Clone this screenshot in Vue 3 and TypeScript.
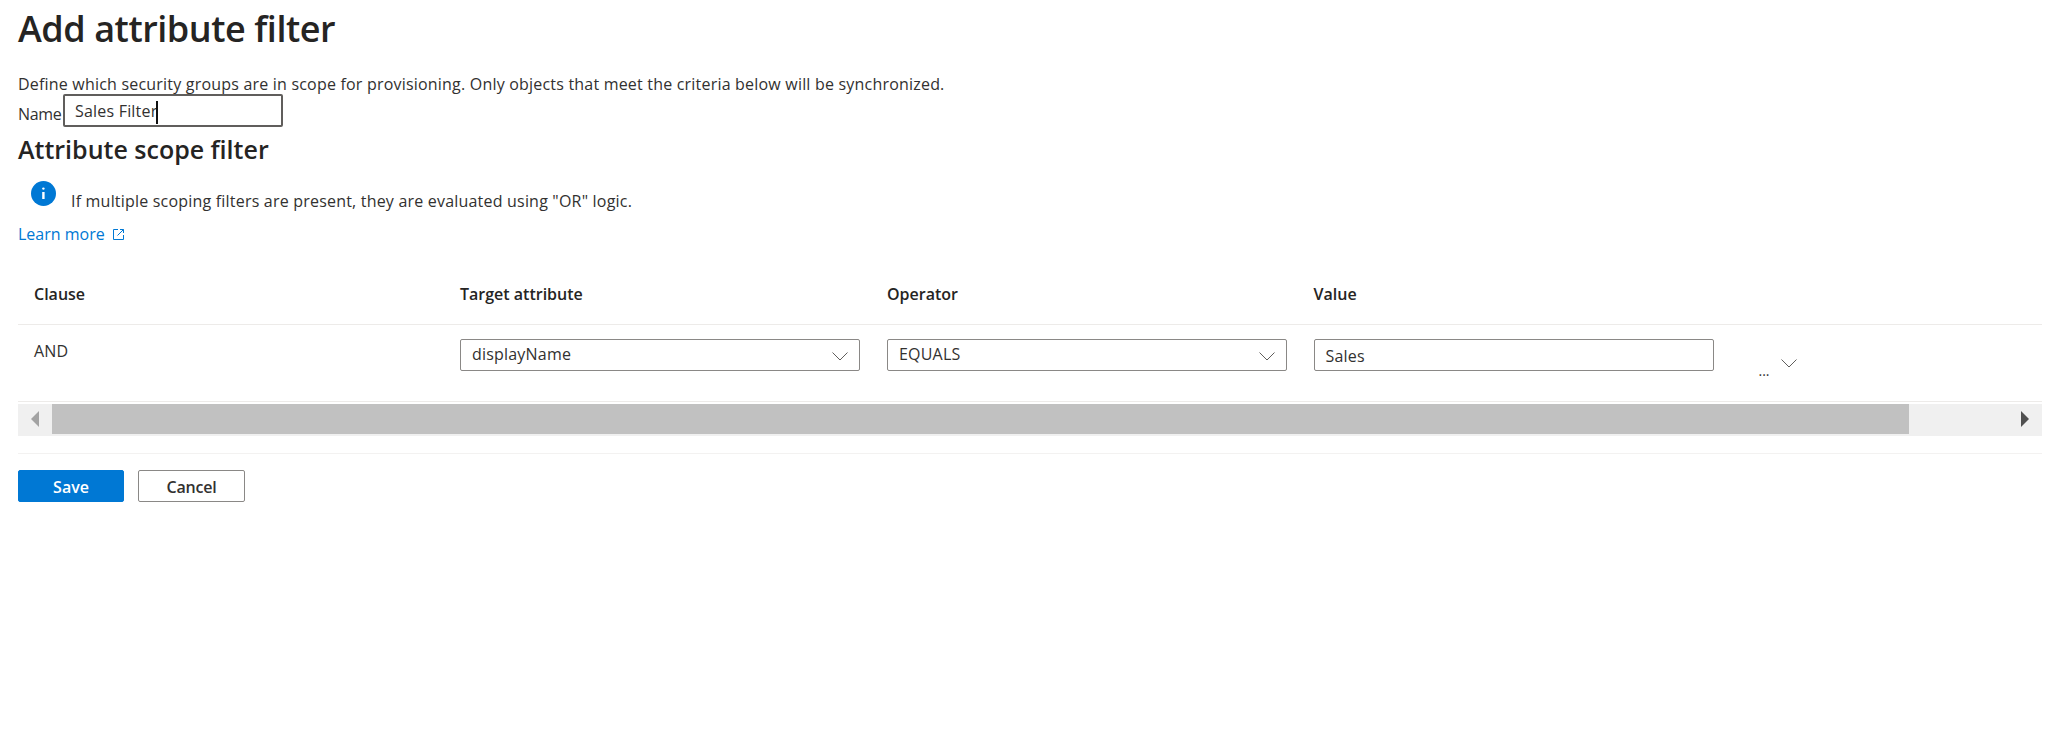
<script setup lang="ts">
const columns: string[] = ['Clause', 'Target attribute', 'Operator', 'Value']
</script>

<template>
  <main class="page">
    <h1 class="title">Add attribute filter</h1>
    <p class="desc">Define which security groups are in scope for provisioning. Only objects that meet the criteria below will be synchronized.</p>
    <div class="name-row">
      <label class="name-label">Name</label>
      <div class="name-input">Sales Filter<span class="caret"></span></div>
    </div>
    <h2 class="subtitle">Attribute scope filter</h2>
    <div class="info">
      <svg class="info-icon" viewBox="0 0 25 25" width="25" height="25">
        <circle cx="12.5" cy="12.5" r="12.5" fill="#0078d4" />
        <rect x="11.2" y="11" width="2.4" height="7" fill="#fff" />
        <rect x="11.2" y="6.4" width="2.4" height="2.4" rx="1.2" fill="#fff" />
      </svg>
      <span class="info-text">If multiple scoping filters are present, they are evaluated using "OR" logic.</span>
    </div>
    <a class="learn">
      Learn more
      <svg class="ext" viewBox="0 0 13 13" width="13" height="13" fill="none" stroke="#0078d4" stroke-width="1">
        <path d="M6 1.5H1.5V11.5H11.5V7" />
        <path d="M8 1.5H11.5V5M11.5 1.5L5.5 7.5" />
      </svg>
    </a>

    <section class="table">
      <div class="grid head">
        <div v-for="c in columns" :key="c" class="th">{{ c }}</div>
      </div>
      <div class="grid row">
        <div class="cell clause">AND</div>
        <div class="cell">
          <div class="field select">
            <span>displayName</span>
            <svg class="chev" viewBox="0 0 16 9" width="16" height="9" fill="none" stroke="#605e5c"><path d="M.5.5L8 8L15.5.5" /></svg>
          </div>
        </div>
        <div class="cell">
          <div class="field select">
            <span>EQUALS</span>
            <svg class="chev" viewBox="0 0 16 9" width="16" height="9" fill="none" stroke="#605e5c"><path d="M.5.5L8 8L15.5.5" /></svg>
          </div>
        </div>
        <div class="cell">
          <div class="field value">Sales</div>
        </div>
        <div class="cell actions">
          <span class="dots">...</span>
          <svg viewBox="0 0 16 9" width="16" height="9" fill="none" stroke="#605e5c"><path d="M.5.5L8 8L15.5.5" /></svg>
        </div>
      </div>
      <div class="scrollbar">
        <span class="arrow left"></span>
        <div class="thumb"></div>
        <span class="arrow right"></span>
      </div>
    </section>

    <div class="buttons">
      <button class="btn primary">Save</button>
      <button class="btn">Cancel</button>
    </div>
  </main>
</template>

<style>
body { background: #fff; }
</style>

<style scoped>
.page {
  padding: 0 8px 0 18px;
  font-family: "Open Sans", "Noto Sans", sans-serif;
  font-size: 16px;
  letter-spacing: 0.2px;
  color: #323130;
}
.title {
  margin: 0;
  height: 60px;
  font-size: 36px;
  line-height: 58px;
  font-weight: 600;
  letter-spacing: -0.45px;
  color: #252423;
}
.desc {
  margin: 0;
  padding-top: 14px;
  line-height: 20px;
}
.name-row {
  display: flex;
  align-items: flex-start;
}
.name-label {
  width: 45px;
  line-height: 20px;
  padding-top: 10px;
  letter-spacing: -0.3px;
}
.name-input {
  box-sizing: border-box;
  width: 220px;
  height: 33px;
  border: 2px solid #605e5c;
  border-radius: 2px;
  padding-left: 10px;
  padding-top: 1px;
  line-height: 29px;
  color: #323130;
}
.caret {
  display: inline-block;
  width: 1.5px;
  height: 23px;
  margin-left: -1px;
  vertical-align: -7px;
  background: #111;
}
.subtitle {
  margin: 0;
  height: 36px;
  font-size: 25px;
  line-height: 44px;
  font-weight: 600;
  letter-spacing: 0;
  color: #252423;
}
.info {
  display: flex;
  align-items: flex-start;
  margin-top: 18px;
  padding-left: 13px;
  height: 25px;
}
.info-text {
  margin-left: 15px;
  line-height: 20px;
  padding-top: 10px;
}
.learn {
  display: flex;
  align-items: center;
  gap: 7px;
  margin-top: 18px;
  height: 20px;
  letter-spacing: 0;
  color: #0078d4;
}
.table {
  margin-top: 15px;
  width: 2024px;
}
.grid {
  display: grid;
  grid-template-columns: 426px 427px 426.5px 1fr;
}
.head {
  align-items: center;
  padding-top: 4px;
  height: 61px;
  border-bottom: 1px solid #edebe9;
}
.th {
  padding-left: 16px;
  font-weight: 600;
  letter-spacing: 0;
  color: #252423;
}
.row {
  grid-template-columns: 426px 427px 426.5px 461px 1fr;
  height: 77px;
  border-bottom: 1px solid #edebe9;
  box-sizing: border-box;
}
.cell {
  padding: 14px 0 0 16px;
}
.clause {
  padding-top: 16px;
  line-height: 20px;
}
.field {
  box-sizing: border-box;
  height: 32px;
  border: 1px solid #8a8886;
  border-radius: 2px;
  display: flex;
  align-items: center;
  justify-content: space-between;
}
.select {
  width: 400px;
  padding: 0 11px 2px;
}
.chev { margin-top: 4px; }
.value {
  width: 400px;
  padding-left: 11px;
  padding-top: 2px;
}
.actions {
  display: flex;
  align-items: flex-start;
  padding: 34px 0 0 0;
  gap: 11px;
}
.dots {
  font-size: 14px;
  line-height: 16px;
  margin-top: 4px;
  letter-spacing: 0;
}
.scrollbar {
  display: flex;
  align-items: stretch;
  height: 32px;
  margin-top: 2px;
  background: #f0f0f0;
  padding-bottom: 2px;
  box-sizing: border-box;
  position: relative;
}
.thumb {
  margin-left: 34px;
  width: 1857px;
  height: 30px;
  background: #c1c1c1;
}
.arrow {
  position: absolute;
  top: 7px;
  width: 0;
  height: 0;
  border-top: 8px solid transparent;
  border-bottom: 8px solid transparent;
}
.arrow.left {
  left: 13px;
  border-right: 8px solid #a3a3a3;
}
.arrow.right {
  right: 13px;
  border-left: 8px solid #505050;
}
.buttons {
  display: flex;
  gap: 14px;
  margin-top: 17px;
  padding-top: 16px;
  border-top: 1px solid #f3f2f1;
  width: 2024px;
}
.btn {
  box-sizing: border-box;
  width: 107px;
  height: 32px;
  padding: 2px 0 0;
  border: 1px solid #8a8886;
  border-radius: 2px;
  background: #fff;
  font: 600 16px "Open Sans", "Noto Sans", sans-serif;
  letter-spacing: -0.2px;
  color: #323130;
}
.btn.primary {
  width: 106px;
  border-color: #0078d4;
  background: #0078d4;
  letter-spacing: 0;
  color: #fff;
}
</style>
